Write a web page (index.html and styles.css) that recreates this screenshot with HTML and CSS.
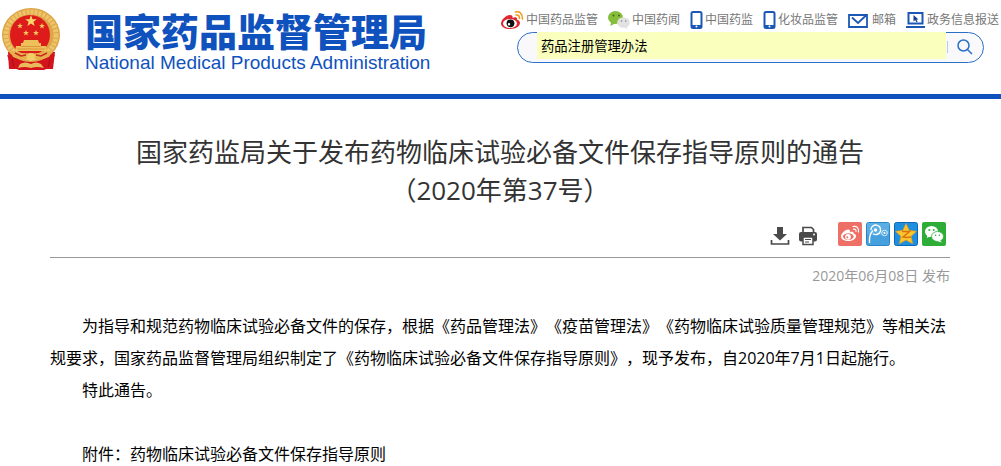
FILE: index.html
```
<!DOCTYPE html>
<html lang="zh-CN">
<head>
    <meta charset="UTF-8">
    <meta name="viewport" content="width=device-width, initial-scale=1.0">
    <title>国家药品监督管理局</title>
    <link rel="stylesheet" href="styles.css">
</head>
<body>
    <header class="header">
        <a class="logo" href="#">
            <svg class="emblem" viewBox="0 0 58 62" aria-hidden="true">
                <path d="M6 44L7 61Q12 59 17 62H42Q47 59 51 61L53 44Z" fill="#d3141d"/>
                <ellipse cx="29" cy="27" rx="29" ry="27" fill="#dda548"/>
                <ellipse cx="29" cy="27" rx="25" ry="23" fill="none" stroke="#edc468" stroke-width="5" stroke-dasharray="3 1"/>
                <ellipse cx="28" cy="27" rx="20" ry="20" fill="#de1b1b"/>
                <path d="M29 7l1.500 4.200h4.300l-3.400 2.600 1.200 4.200-3.600-2.500-3.600 2.500 1.200-4.200-3.400-2.600h4.300z" fill="#f8d66b"/>
                <g fill="#f4c95c">
                    <path id="star" d="M18 15l.8 2h2.200l-1.800 1.300.7 2.100-1.900-1.200-1.900 1.200.7-2.100-1.800-1.300h2.200z"/>
                    <use href="#star" x="22" y="0"/>
                    <use href="#star" x="6" y="7"/>
                    <use href="#star" x="16" y="7"/>
                </g>
                <path d="M22 32h14l1 3h-16zM19 35h20v3h-20zM14 38h30l1 5h-32z" fill="#eec05a"/>
                <path d="M19 38.500h20M15 41h28" stroke="#cf7b2a" stroke-width="0.600"/>
                <path d="M8 42Q17 46 29 45Q41 46 50 42L47 49Q39 53 29 50Q19 53 11 49Z" fill="#e6b04c"/>
                <path d="M13 45l6 3 5-1M45 45l-6 3-5-1" fill="none" stroke="#c92b1c" stroke-width="1.500"/>
                <circle cx="29" cy="49" r="4" fill="#f3cc6a"/>
                <path d="M5 47Q17 51 25 57L17 61 7 61Q8 53 5 47zM53 47Q40 51 32 57L40 61 51 61Q49 53 53 47z" fill="#d3141d"/>
                <path d="M18 56Q23 53 29 56Q34 53 39 56L42 60Q35 58 29 60Q22 58 16 60Z" fill="#eabb5a"/>
                <path d="M10 51l2 8M48 51l-2 8" stroke="#a80f16" stroke-width="1"/>
            </svg>
            <span class="logo-text">
                <strong class="logo-cn">国家药品监督管理局</strong>
                <span class="logo-en">National Medical Products Administration</span>
            </span>
        </a>
        <div class="header-right">
            <nav class="top-nav">
                <a href="#">
                    <svg width="23" height="20" viewBox="0 0 23 20" aria-hidden="true">
                        <path d="M9 5C5 5 0 10 0 13.500C0 17 4 19 9 19C15 19 19 16 19 13C19 11 17.500 10 16 9.700C16.500 7.500 14.500 6.500 11.500 8C12 6 11 5 9 5Z" fill="#e0282f"/>
                        <ellipse cx="9" cy="13.500" rx="7" ry="4.600" fill="#fff"/>
                        <circle cx="9.500" cy="13.300" r="3.900" fill="#111"/>
                        <circle cx="8" cy="14.300" r="1.200" fill="#fff"/>
                        <path d="M14.500 2Q21 .500 21.500 9M15 5Q18.500 4.500 18.500 8.500" fill="none" stroke="#f39a1c" stroke-width="1.600" stroke-linecap="round"/>
                    </svg>
                    中国药品监管
                </a>
                <a href="#">
                    <svg width="22" height="20" viewBox="0 0 22 20" aria-hidden="true">
                        <ellipse cx="7.500" cy="7.500" rx="7.500" ry="6.500" fill="#86bd3b"/>
                        <path d="M3 12L2.500 16 7 13.500z" fill="#86bd3b"/>
                        <circle cx="5.500" cy="5.500" r="1" fill="#3d6b16"/>
                        <circle cx="11" cy="5.500" r="1" fill="#3d6b16"/>
                        <ellipse cx="15.500" cy="12.500" rx="6.300" ry="5.300" fill="#e2e2e2"/>
                        <path d="M18 16l2 3-4-1.500z" fill="#e2e2e2"/>
                        <circle cx="13.500" cy="11" r=".8" fill="#888"/>
                        <circle cx="17.700" cy="11" r=".8" fill="#888"/>
                    </svg>
                    中国药闻
                </a>
                <a href="#">
                    <svg width="13" height="20" viewBox="0 0 13 20" aria-hidden="true">
                        <rect x="1.500" y="2" width="10" height="16" rx="1.500" fill="#fff" stroke="#1b58b5" stroke-width="2"/>
                        <path d="M1 15h11v3h-11z" fill="#1b58b5"/>
                        <circle cx="6.500" cy="16.500" r="1" fill="#fff"/>
                    </svg>
                    中国药监
                </a>
                <a href="#">
                    <svg width="13" height="20" viewBox="0 0 13 20" aria-hidden="true">
                        <rect x="1.500" y="2" width="10" height="16" rx="1.500" fill="#fff" stroke="#1b58b5" stroke-width="2"/>
                        <path d="M1 15h11v3h-11z" fill="#1b58b5"/>
                        <circle cx="6.500" cy="16.500" r="1" fill="#fff"/>
                    </svg>
                    化妆品监管
                </a>
                <a href="#">
                    <svg width="22" height="20" viewBox="0 0 22 20" aria-hidden="true">
                        <path d="M1 5h18v12h-18zM4 7.500l6 5.500 8.500-8" fill="none" stroke="#1b58b5" stroke-width="1.800"/>
                    </svg>
                    邮箱
                </a>
                <a href="#">
                    <svg width="19" height="20" viewBox="0 0 19 20" aria-hidden="true">
                        <rect x="2.500" y="3" width="14" height="10.500" fill="#fff" stroke="#1b58b5" stroke-width="2"/>
                        <path d="M0 16h19v2h-19z" fill="#1b58b5"/>
                        <path d="M7.500 5v6.500l1.700-1.500 1.200 2.300 1.200-.6-1.200-2.200h2.100z" fill="#123f8c"/>
                    </svg>
                    政务信息报送
                </a>
            </nav>
            <form class="search" role="search">
                <input type="text" class="search-input" aria-label="搜索" value="药品注册管理办法">
                <button type="submit" class="search-btn" aria-label="搜索">
                    <svg width="16" height="16" viewBox="0 0 16 16" aria-hidden="true">
                        <path d="M10.700 10.700L15 15M12 6.500A5.500 5.500 0 1 1 1 6.500A5.500 5.500 0 1 1 12 6.500" fill="none" stroke="#2a70c8" stroke-width="1.500"/>
                    </svg>
                </button>
            </form>
        </div>
    </header>

    <main class="article">
        <h1 class="title">国家药监局关于发布药物临床试验必备文件保存指导原则的通告<br>（2020年第37号）</h1>
        <div class="tools">
            <button type="button" class="tool" aria-label="下载">
                <svg width="20" height="20" viewBox="0 0 20 20" aria-hidden="true">
                    <path d="M7 1h6v7h4L10 14.500 3 8h4z" fill="#4a4a4a"/>
                    <path d="M1.500 14v4h17v-4" fill="none" stroke="#4a4a4a" stroke-width="1.700"/>
                </svg>
            </button>
            <button type="button" class="tool" aria-label="打印">
                <svg width="20" height="20" viewBox="0 0 20 20" aria-hidden="true">
                    <path d="M5 6V1.500h8.500L15.500 3.500V6" fill="#fff" stroke="#4a4a4a" stroke-width="1.700"/>
                    <rect x="1" y="6" width="18" height="9.500" rx="2" fill="#4a4a4a"/>
                    <circle cx="16" cy="8.500" r="1" fill="#fff"/>
                    <rect x="5" y="11" width="10" height="7.500" fill="#fff" stroke="#4a4a4a" stroke-width="1.500"/>
                    <path d="M7 13.500h6M7 16h4" stroke="#4a4a4a" stroke-width="1.200"/>
                </svg>
            </button>
            <div class="share">
                <a href="#" aria-label="新浪微博">
                    <svg width="24" height="24" viewBox="0 0 24 24" aria-hidden="true">
                        <rect width="24" height="24" rx="2" fill="#ee6f66"/>
                        <path d="M10 7.500C7 7.500 3 11.500 3 14.500C3 17.500 6.500 19 10.500 19C15 19 18 16.500 18 14.200C18 12.500 16.800 11.900 15.600 11.600C16 9.800 14.500 9.200 12 10.200C12.400 8.500 11.700 7.500 10 7.500Z" fill="#fff"/>
                        <ellipse cx="10.300" cy="14.600" rx="5.300" ry="3.400" fill="#ee6f66"/>
                        <circle cx="10" cy="14.800" r="2.900" fill="#fff"/>
                        <circle cx="9.300" cy="15.200" r="1" fill="#ee6f66"/>
                        <path d="M15 4.500Q21 3.500 20.500 10M15.500 7.200Q18.300 6.800 18 9.500" fill="none" stroke="#fff" stroke-width="1.200" stroke-linecap="round"/>
                    </svg>
                </a>
                <a href="#" aria-label="腾讯微博">
                    <svg width="24" height="24" viewBox="0 0 24 24" aria-hidden="true">
                        <rect x=".5" y=".5" width="23" height="23" rx="2" fill="#45a0dd" stroke="#2a83c4"/>
                        <path d="M1 1h22v10q-11 4-22 1z" fill="#5aaee4"/>
                        <path d="M3.500 20.500Q3 13 6.500 9M7.500 12A4.800 4.800 0 1 0 5 7.500" fill="none" stroke="#fff" stroke-width="1.400" stroke-linecap="round"/>
                        <circle cx="9.500" cy="8" r="1.700" fill="#fff"/>
                        <circle cx="18.500" cy="11" r="2.800" fill="none" stroke="#d8eefb"/>
                        <circle cx="18.500" cy="11" r="1" fill="#fff"/>
                    </svg>
                </a>
                <a href="#" aria-label="QQ空间">
                    <svg width="24" height="24" viewBox="0 0 24 24" aria-hidden="true">
                        <rect x=".5" y=".5" width="23" height="23" rx="2" fill="#1d8fe0" stroke="#0b66b5"/>
                        <path d="M12 1.500l3.200 6.900 7.300.9-5.400 5 1.500 7.400-6.600-3.700-6.600 3.700 1.500-7.400-5.400-5 7.300-.9z" fill="#fcc62d" stroke="#e99a12" stroke-width=".7"/>
                        <path d="M8 9.500h7.500l-6.500 5.500q4 .8 8 0" fill="none" stroke="#d9720f" stroke-width="1.500"/>
                    </svg>
                </a>
                <a href="#" aria-label="微信">
                    <svg width="24" height="24" viewBox="0 0 24 24" aria-hidden="true">
                        <rect width="24" height="24" rx="2" fill="#2dad38"/>
                        <ellipse cx="9.500" cy="9.500" rx="6.500" ry="5.500" fill="#fff"/>
                        <path d="M5.500 13l-.7 3 3.500-1.800z" fill="#fff"/>
                        <circle cx="7.300" cy="8" r="1" fill="#2dad38"/>
                        <circle cx="11.700" cy="8" r="1" fill="#2dad38"/>
                        <ellipse cx="15.500" cy="14.500" rx="6" ry="5" fill="#fff" stroke="#2dad38" stroke-width=".8"/>
                        <path d="M18 18l1.800 2.500-4-1.300z" fill="#fff"/>
                        <circle cx="13.600" cy="13.200" r=".8" fill="#2dad38"/>
                        <circle cx="17.400" cy="13.200" r=".8" fill="#2dad38"/>
                    </svg>
                </a>
            </div>
        </div>
        <p class="date">2020年06月08日 发布</p>
        <div class="content">
            <p>为指导和规范药物临床试验必备文件的保存，根据《药品管理法》《疫苗管理法》《药物临床试验质量管理规范》等相关法规要求，国家药品监督管理局组织制定了《药物临床试验必备文件保存指导原则》，现予发布，自2020年7月1日起施行。</p>
            <p>特此通告。</p>
            <p class="attachment">附件：药物临床试验必备文件保存指导原则</p>
        </div>
    </main>
</body>
</html>
```

FILE: styles.css
```
body {
    margin: 0;
    background: #fff;
    color: #000;
    font-family: "Open Sans", "Noto Sans CJK SC", sans-serif;
    text-spacing-trim: space-all;
}

a {
    color: inherit;
    text-decoration: none;
}

svg {
    display: block;
    flex: none;
}

/* header */
.header {
    display: flex;
    justify-content: space-between;
    height: 94px;
    border-bottom: 5px solid #0f52bd;
}

.logo {
    display: flex;
    padding: 8px 0 0 2px;
    color: #0f52bd;
}

.emblem {
    width: 58px;
    height: 62px;
}

.logo-text {
    display: flex;
    flex-direction: column;
    margin-left: 25px;
    white-space: nowrap;
}

.logo-cn {
    font-family: "Noto Sans CJK SC", sans-serif;
    font-size: 38px;
    font-weight: 900;
    line-height: 44px;
}

.logo-en {
    font-family: "Liberation Sans", Arial, sans-serif;
    font-size: 19px;
    line-height: 22px;
}

.top-nav {
    display: flex;
    gap: 10px;
    padding: 10px 2px 2px 0;
    font-size: 12px;
    line-height: 20px;
    color: #777;
    white-space: nowrap;
}

.top-nav a {
    display: flex;
    gap: 2px;
}

.search {
    display: flex;
    box-sizing: border-box;
    height: 31px;
    margin: 0 17px 0 16px;
    padding-left: 19px;
    border: 1px solid #2a70c8;
    border-radius: 16px;
    background: #f9f9fb;
}

.search-input {
    flex: 1;
    min-width: 0;
    height: 27px;
    margin-top: -1px;
    padding: 0 4px;
    border: 0;
    background: #faffbd;
    font-family: inherit;
    outline: none;
}

.search-btn {
    display: flex;
    justify-content: center;
    align-items: center;
    width: 37px;
    height: 27px;
    padding: 0;
    border: 0;
    background: linear-gradient(#b9cbe2, #b9cbe2) 1px 8px / 1px 12px no-repeat;
    cursor: pointer;
}

/* article */
.article {
    margin: 0 51px 0 50px;
    padding-top: 34px;
}

.title {
    margin: 0;
    color: #333;
    font-size: 26px;
    font-weight: normal;
    line-height: 38px;
    text-align: center;
}

.tools {
    display: flex;
    justify-content: flex-end;
    align-items: flex-end;
    gap: 8px;
    margin-top: 13px;
    padding: 0 4px 11px 0;
    border-bottom: 1px solid #999;
}

.tool {
    padding: 0;
    border: 0;
    background: none;
    cursor: pointer;
}

.share {
    display: flex;
    gap: 4px;
    margin-left: 12px;
}

.date {
    margin: 8px 0 0;
    color: #999;
    font-size: 14px;
    line-height: 20px;
    text-align: right;
}

.content {
    margin-top: 24px;
    font-size: 16px;
    line-height: 32px;
}

.content p {
    margin: 0;
    text-indent: 2em;
}

.content .attachment {
    margin-top: 32px;
}
```
